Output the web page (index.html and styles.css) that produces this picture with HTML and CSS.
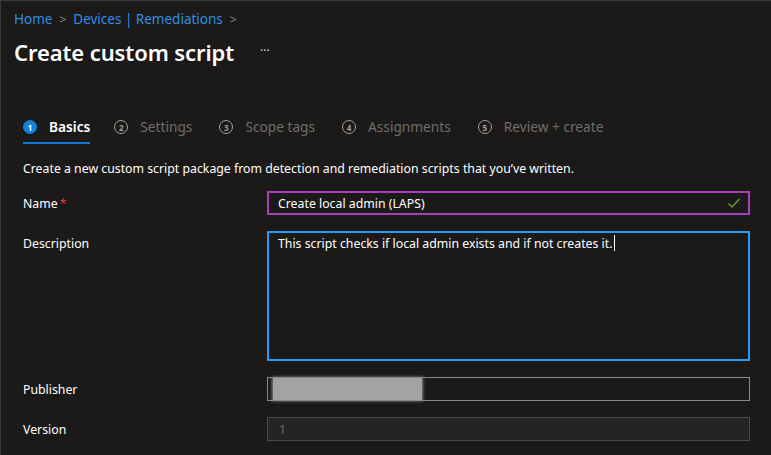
FILE: index.html
```html
<!DOCTYPE html>
<html>
<head>
<meta charset="utf-8">
<link rel="stylesheet" href="styles.css">
</head>
<body>
<div class="page">
  <nav class="crumbs">
    <a class="crumb">Home</a><span class="sep">&gt;</span><a class="crumb">Devices | Remediations</a><span class="sep">&gt;</span>
  </nav>
  <div class="titlebar">
    <h1 class="title">Create custom script</h1>
    <span class="more">···</span>
  </div>
  <div class="tabs">
    <div class="tab active"><span class="num">1</span><span class="tlabel">Basics</span></div>
    <div class="tab"><span class="num">2</span><span class="tlabel">Settings</span></div>
    <div class="tab"><span class="num">3</span><span class="tlabel">Scope tags</span></div>
    <div class="tab"><span class="num">4</span><span class="tlabel">Assignments</span></div>
    <div class="tab"><span class="num">5</span><span class="tlabel">Review + create</span></div>
  </div>
  <p class="intro">Create a new custom script package from detection and remediation scripts that you’ve written.</p>
  <div class="form">
    <div class="row">
      <label class="lbl">Name<span class="req">*</span></label>
      <div class="field name">
        <span class="val">Create local admin (LAPS)</span>
        <svg class="check" width="14" height="12" viewBox="0 0 14 12"><path d="M1.5 6.5 L5 10 L12.5 2" fill="none" stroke="#6a9a3a" stroke-width="1.4"/></svg>
      </div>
    </div>
    <div class="row desc">
      <label class="lbl">Description</label>
      <div class="field area"><span class="val">This script checks if local admin exists and if not creates it.</span><span class="caret"></span></div>
    </div>
    <div class="row">
      <label class="lbl">Publisher</label>
      <div class="field pub"><span class="blur"></span></div>
    </div>
    <div class="row">
      <label class="lbl">Version</label>
      <div class="field ver"><span class="val dim">1</span></div>
    </div>
  </div>
</div>
</body>
</html>
```
FILE: styles.css
```css
html, body {
  margin: 0;
  padding: 0;
  background: #1b1a19;
}
body {
  width: 771px;
  height: 455px;
  overflow: hidden;
  font-family: "Noto Sans", "Open Sans", sans-serif;
  color: #ffffff;
  box-sizing: border-box;
  border-left: 1px solid #3a3938;
  border-top: 1px solid #3a3938;
}
.page {
  padding: 0 0 0 13px;
}
.crumbs {
  display: flex;
  align-items: center;
  height: 34px;
  padding-top: 1px;
  font-size: 13.5px;
}
.crumb {
  color: #2f8fe6;
}
.sep {
  color: #8a8886;
  margin: 0 7px;
  font-size: 12px;
}
.titlebar {
  display: flex;
  align-items: center;
  height: 32px;
}
.title {
  margin: 0;
  font-size: 22px;
  font-weight: 600;
  letter-spacing: -0.1px;
}
.more {
  margin-left: 26px;
  font-size: 12px;
  color: #d0d0d0;
  margin-top: -4px;
}
.tabs {
  display: flex;
  margin-top: 50px;
  margin-left: 9px;
  height: 26px;
}
.tab {
  display: flex;
  align-items: flex-start;
  margin-right: 27px;
  height: 26px;
  box-sizing: border-box;
}
.tab.active {
  border-bottom: 2px solid #0f78d4;
  margin-right: 24px;
}
.num {
  width: 12px;
  height: 12px;
  border-radius: 50%;
  border: 1px solid #a19f9d;
  color: #a19f9d;
  font-size: 8px;
  font-weight: 700;
  display: flex;
  align-items: center;
  justify-content: center;
  margin-top: 2px;
  margin-right: 12px;
}
.tab.active .num {
  background: #1380dc;
  border-color: #1380dc;
  color: #fff;
}
.tlabel {
  font-size: 13.7px;
  color: #6f6d6b;
  line-height: 18px;
}
.tab.active .tlabel {
  color: #fff;
  font-weight: 600;
}
.intro {
  margin: 17px 0 0 9px;
  font-size: 12.3px;
  line-height: 16px;
}
.form {
  margin-top: 14px;
  margin-left: 9px;
  display: flex;
  flex-direction: column;
  gap: 16px;
}
.row {
  display: flex;
  align-items: center;
}
.row.desc {
  align-items: flex-start;
}
.lbl {
  width: 244px;
  font-size: 12.3px;
}
.row.desc .lbl {
  padding-top: 4px;
}
.req {
  color: #e0383e;
  margin-left: 2px;
}
.field {
  width: 483px;
  height: 24px;
  box-sizing: border-box;
  border: 1px solid #8a8886;
  display: flex;
  align-items: center;
  font-size: 12.3px;
  padding: 0 9px;
  position: relative;
}
.field.name {
  border: 2px solid #a83fba;
  justify-content: space-between;
}
.field.area {
  height: 130px;
  border: 2px solid #2899f5;
  align-items: flex-start;
  padding-top: 2px;
}
.caret {
  display: inline-block;
  width: 1px;
  height: 16px;
  background: #fff;
  margin-left: 1px;
}
.field.pub {
  padding: 0 0 0 5px;
  border-color: #8a8886;
}
.blur {
  width: 149px;
  height: 22px;
  background: #a3a3a3;
  box-shadow: 0 0 3px 1px #8a8a8a;
}
.field.ver {
  background: #252423;
  border-color: #4c4a48;
  padding-left: 11px;
}
.dim {
  color: #6e6c6a;
}
.check {
  margin-right: -2px;
}
```
